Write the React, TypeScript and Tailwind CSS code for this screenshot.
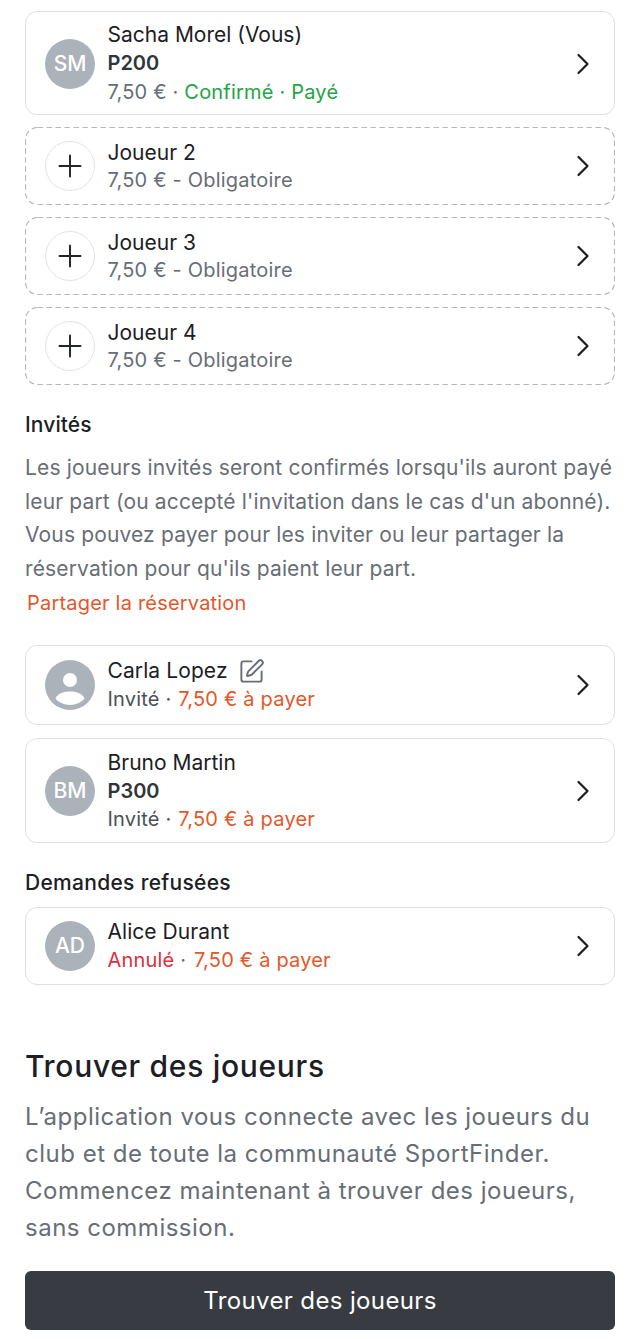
import { ChevronRight, Plus, SquarePen } from "lucide-react";
import type { ReactNode } from "react";

function Card({ children, lead, dashed, note }: { children: ReactNode; lead: ReactNode; dashed?: boolean; note?: string }) {
  return (
    <div
      className={`relative flex items-center rounded-xl border bg-white pl-[19px] pr-[13px] ${note} ${
        dashed ? "border-transparent" : "border-[#dfe1e4]"
      }`}
    >
      {dashed && (
        <svg viewBox="0 0 590 78" className="absolute -inset-px h-[78px] w-[590px]" fill="none">
          <rect x="0.5" y="0.5" width="589" height="77" rx="12" stroke="#b4b8bd" strokeWidth="1.2" strokeDasharray="5.5 3.5" />
        </svg>
      )}
      {lead}
      <div className="ml-[12.5px] min-w-0 flex-1">{children}</div>
      <ChevronRight size={36} strokeWidth={1.5} className="text-[#1c2024]" />
    </div>
  );
}

function Initials({ text }: { text: string }) {
  return (
    <div className="flex size-[50px] shrink-0 items-center justify-center rounded-full bg-[#acb2ba] text-[21px] font-medium text-white">
      {text}
    </div>
  );
}

function AddCircle() {
  return (
    <div className="flex size-[50px] shrink-0 items-center justify-center rounded-full border border-[#e1e3e6] text-[#22262b]">
      <Plus size={36} strokeWidth={1.3} />
    </div>
  );
}

function Ghost() {
  return (
    <div className="size-[50px] shrink-0">
      <svg viewBox="0 0 50 50" className="size-[50px]">
        <circle cx="25" cy="25" r="25" fill="#acb2ba" />
        <circle cx="25" cy="20" r="7" fill="#fff" />
        <path d="M10.5 38.5C13 33 19 31.5 25 31.5S37 33 39.5 38.5C37 42 31 45 25 45S13 42 10.5 38.5Z" fill="#fff" />
      </svg>
    </div>
  );
}

function OpenSlot({ n }: { n: number }) {
  return (
    <Card dashed lead={<AddCircle />} note="h-[78px]">
      <div className="pt-px">
        <p className="text-[21px] leading-[27px] text-[#1c2024]">Joueur {n}</p>
        <p className="text-[20px] leading-[28px] tracking-[0.2px] text-[#676e76]">7,50 € - Obligatoire</p>
      </div>
    </Card>
  );
}

export default function App() {
  return (
    <div className="min-h-[1339px] bg-white px-[25px] pt-[11px] font-['Inter',sans-serif]">
      <div className="flex flex-col gap-3">
        <Card lead={<Initials text="SM" />} note="h-[104px] pt-px">
          <p className="text-[21px] leading-[28px] text-[#1c2024]">Sacha Morel (Vous)</p>
          <p className="text-[20px] font-semibold leading-[29px] text-[#30353a]">P200</p>
          <p className="text-[20px] leading-[28px] tracking-[0.2px] text-[#676e76]">
            7,50 € · <span className="text-[#22a447]">Confirmé · Payé</span>
          </p>
        </Card>
        <OpenSlot n={2} />
        <OpenSlot n={3} />
        <OpenSlot n={4} />
      </div>

      <h2 className="mt-[26px] text-[21px] font-medium leading-[28px] tracking-[0.1px] text-[#1c2024]">Invités</h2>
      <p className="mt-[12px] text-[21px] leading-[33.5px] tracking-[0.15px] text-[#676e76]">
        Les joueurs invités seront confirmés lorsqu'ils auront payé leur part (ou accepté l'invitation dans le cas d'un
        abonné). Vous pouvez payer pour les inviter ou leur partager la réservation pour qu'ils paient leur part.
      </p>
      <p className="ml-[2px] mt-[3px] text-[20px] leading-[30px] tracking-[0.2px] text-[#e4572a]">Partager la réservation</p>

      <div className="mt-[27px] flex flex-col gap-[13px]">
        <Card lead={<Ghost />} note="h-[80px]">
          <p className="flex items-center gap-[10px] text-[21px] leading-[28px] tracking-[0.1px] text-[#1c2024]">
            Carla Lopez <SquarePen size={27} strokeWidth={1.7} className="text-[#676e76]" />
          </p>
          <p className="text-[20px] leading-[28px] tracking-[0.2px] text-[#4a5057]">
            Invité · <span className="ml-px text-[#e4572a]">7,50 € à payer</span>
          </p>
        </Card>
        <Card lead={<Initials text="BM" />} note="h-[105px]">
          <p className="text-[21px] leading-[28px] text-[#1c2024]">Bruno Martin</p>
          <p className="text-[20px] font-semibold leading-[28px] text-[#30353a]">P300</p>
          <p className="text-[20px] leading-[28px] tracking-[0.2px] text-[#4a5057]">
            Invité · <span className="ml-px text-[#e4572a]">7,50 € à payer</span>
          </p>
        </Card>
      </div>

      <h2 className="mt-[26px] text-[21px] font-medium leading-[28px] tracking-[0.3px] text-[#1c2024]">Demandes refusées</h2>
      <div className="mt-[10px]">
        <Card lead={<Initials text="AD" />} note="h-[78px]">
          <p className="text-[21px] leading-[28px] tracking-[0.05px] text-[#1c2024]">Alice Durant</p>
          <p className="text-[20px] leading-[28px] tracking-[0.2px] text-[#e02d3c]">
            Annulé <span className="text-[#676e76]">·</span> <span className="ml-[2px] text-[#e4572a]">7,50 € à payer</span>
          </p>
        </Card>
      </div>

      <h2 className="mt-[59px] text-[30px] font-medium leading-[44px] tracking-[0.7px] text-[#1c2024]">Trouver des joueurs</h2>
      <p className="mt-[10px] text-[24px] leading-[37px] tracking-[0.5px] text-[#676e76]">
        L’application vous connecte avec les joueurs du club et de toute la communauté SportFinder. Commencez maintenant à
        trouver des joueurs, sans commission.
      </p>
      <button className="mt-[25px] flex h-[59px] w-full items-center justify-center rounded-md bg-[#383c42] text-[24px] tracking-[0.37px] text-white">
        Trouver des joueurs
      </button>
    </div>
  );
}
